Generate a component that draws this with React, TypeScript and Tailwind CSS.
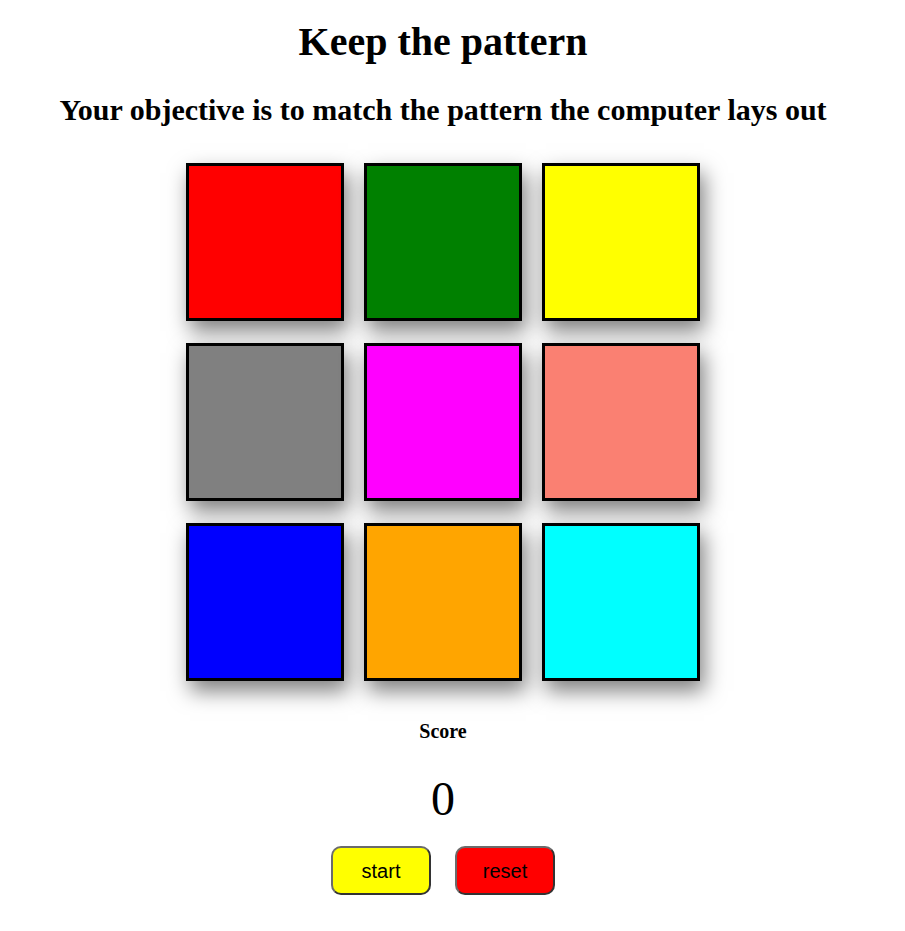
import React from "react";

const colors = [
  "bg-[#ff0000]",
  "bg-[#008000]",
  "bg-[#ffff00]",
  "bg-[#808080]",
  "bg-[#ff00ff]",
  "bg-[#fa8072]",
  "bg-[#0000ff]",
  "bg-[#ffa500]",
  "bg-[#00ffff]",
];

export default function App() {
  return (
    <div className="w-[886px] min-h-[931px] bg-white flex flex-col items-center text-black font-['Liberation_Serif',serif]">
      <h1 className="mt-[19px] text-[40px] leading-[46px] font-bold">Keep the pattern</h1>
      <h2 className="mt-[28px] text-[30px] leading-[34px] font-bold">
        Your objective is to match the pattern the computer lays out
      </h2>
      <div className="mt-[36px] grid grid-cols-[158px_158px_158px] gap-x-[20px] gap-y-[22px]">
        {colors.map((c, i) => (
          <div
            key={i}
            className={`w-[158px] h-[158px] border-[3px] border-black ${c} shadow-[4px_10px_20px_rgba(0,0,0,0.5)]`}
          />
        ))}
      </div>
      <div className="mt-[39px] text-[20px] leading-[23px] font-bold">Score</div>
      <div className="mt-[28px] text-[48px] leading-[55px]">0</div>
      <div className="mt-[20px] flex gap-[24px] font-['Liberation_Sans',sans-serif]">
        <button className="w-[100px] h-[49px] rounded-[10px] border-2 border-[#6b6b6b] border-b-[#333] border-r-[#333] bg-[#ffff00] text-[20px] text-black">
          start
        </button>
        <button className="w-[100px] h-[49px] rounded-[10px] border-2 border-[#6b6b6b] border-b-[#333] border-r-[#333] bg-[#ff0000] text-[20px] text-black">
          reset
        </button>
      </div>
    </div>
  );
}
